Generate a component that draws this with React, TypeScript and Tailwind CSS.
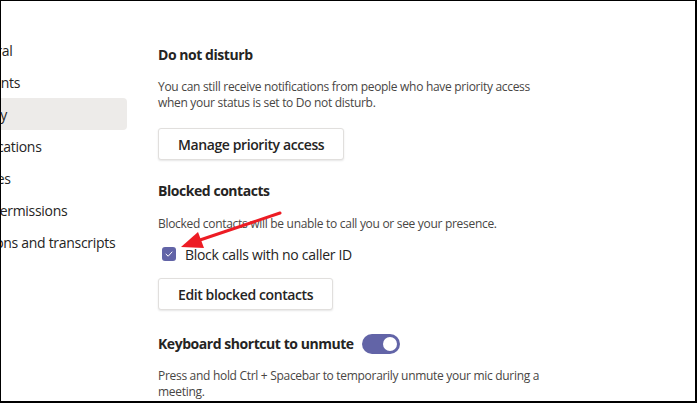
import React from 'react';

const navItems = [
    'General',
    'Accounts',
    'Privacy',
    'Notifications',
    'Devices',
    'App permissions',
    'Captions and transcripts',
];

function Checkbox({ checked }: { checked: boolean }) {
    return (
        <span className={checked ? "flex h-[14px] w-[14px] items-center justify-center rounded-[3px] bg-[#6264a7]" : "h-[14px] w-[14px] rounded-[3px] border border-gray-500"}>
            {checked && (
                <svg width="10" height="10" viewBox="0 0 10 10" fill="none">
                    <path d="M2 5.2 L4.2 7.2 L8 3" stroke="white" strokeWidth="1" strokeLinecap="round" strokeLinejoin="round" />
                </svg>
            )}
        </span>
    );
}

function Toggle({ on }: { on: boolean }) {
    return (
        <span className="flex h-[20px] w-[38px] items-center justify-end rounded-full bg-[#6264a7] px-[3px]">
            <span className="h-[14px] w-[14px] rounded-full bg-white" />
        </span>
    );
}

function SecondaryButton({ label }: { label: string }) {
    return (
        <button className="h-[32px] rounded-[3px] border border-[#e1dfdd] bg-white px-[19px] text-[14px] font-semibold tracking-[-0.4px] text-[#252423] shadow-[0_1px_2px_rgba(0,0,0,0.1)]">
            {label}
        </button>
    );
}

export default function App() {
    return (
        <div
            className="relative flex h-[403px] w-[697px] overflow-hidden border-t border-l border-r-2 border-b-2 border-black bg-white tracking-[-0.3px]"
            style={{ fontFamily: '"Segoe UI", "Open Sans", sans-serif' }}
        >
            <nav className="w-[126px] shrink-0 overflow-hidden pt-[33px]">
                <ul role="list">
                    {navItems.map((item) => (
                        <li
                            key={item}
                            className={
                                item === 'Privacy'
                                    ? 'flex h-[32px] items-center rounded-r-[4px] bg-[#edebe9] text-[14px] text-[#252423]'
                                    : 'flex h-[32px] items-center text-[14px] text-[#252423]'
                            }
                        >
                            <span className="ml-[-38px] whitespace-nowrap">{item}</span>
                        </li>
                    ))}
                </ul>
            </nav>

            <main className="ml-[31px] flex flex-col pt-[44px] text-[#252423]">
                <h2 className="text-[14px] font-bold leading-[20px] tracking-[-0.45px]">Do not disturb</h2>
                <p className="mt-[14px] w-[400px] text-[12px] leading-[16px] text-[#484644]">
                    You can still receive notifications from people who have priority access when your status is set to Do not disturb.
                </p>
                <div className="mt-[17px]">
                    <SecondaryButton label="Manage priority access" />
                </div>

                <h2 className="mt-[21px] text-[14px] font-bold leading-[20px] tracking-[-0.45px]">Blocked contacts</h2>
                <p className="mt-[15px] text-[12px] leading-[16px] text-[#484644]">
                    Blocked contacts will be unable to call you or see your presence.
                </p>
                <label className="mt-[12px] flex h-[20px] items-center gap-[9px] pl-[4px] text-[14px]">
                    <Checkbox checked={true} />
                    <span>Block calls with no caller ID</span>
                </label>
                <div className="mt-[14px]">
                    <SecondaryButton label="Edit blocked contacts" />
                </div>

                <div className="mt-[24px] flex h-[20px] items-center gap-[8px]">
                    <h2 className="text-[14px] font-bold leading-[20px] tracking-[-0.45px]">Keyboard shortcut to unmute</h2>
                    <Toggle on={true} />
                </div>
                <p className="mt-[14px] w-[400px] text-[12px] leading-[16px] text-[#484644]">
                    Press and hold Ctrl + Spacebar to temporarily unmute your mic during a meeting.
                </p>
            </main>

            {/* red annotation arrow */}
            <svg className="pointer-events-none absolute left-0 top-0" width="697" height="403">
                <line x1="279" y1="212" x2="196" y2="240" stroke="#ed1c24" strokeWidth="3" strokeLinecap="round" />
                <polygon points="180,246 203,247 197,231" fill="#ed1c24" />
            </svg>
        </div>
    );
}
